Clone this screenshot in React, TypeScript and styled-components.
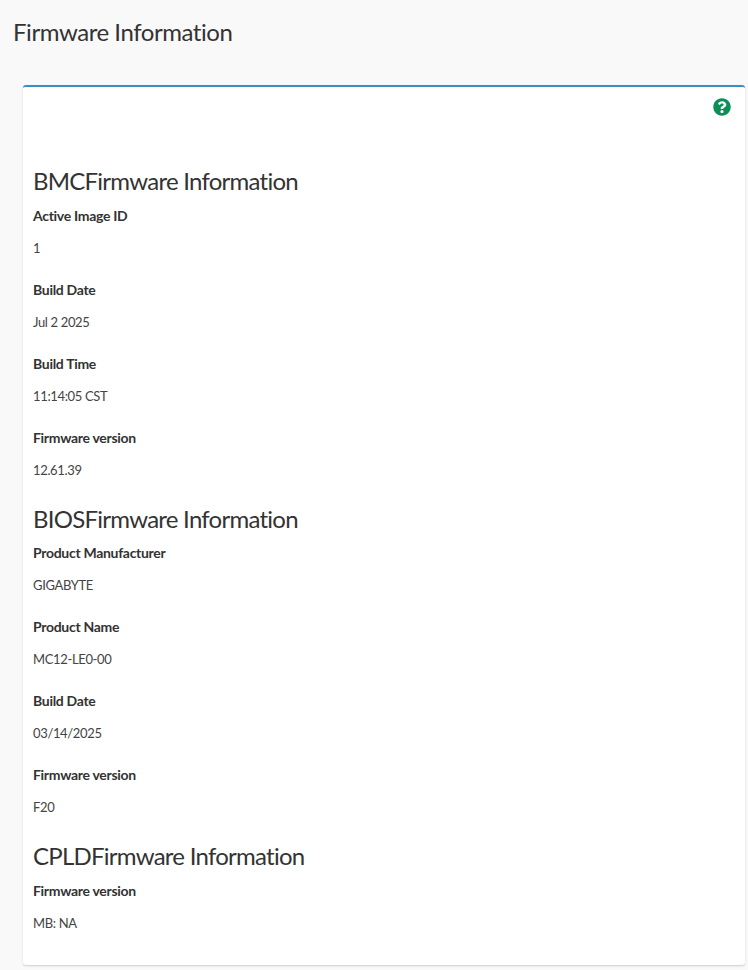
import React from "react";
import styled, { createGlobalStyle } from "styled-components";
import { FaQuestionCircle } from "react-icons/fa";

const Global = createGlobalStyle`
  html, body { margin: 0; padding: 0; background: #f9f9f9; }
  body { font-family: "Source Sans Pro", Lato, "Open Sans", sans-serif; color: #333; }
`;
const Page = styled.div`width: 748px; height: 970px; overflow: hidden; box-sizing: border-box;`;
const Header = styled.h1`margin: 0; padding: 18px 0 0 13px; height: 85px; box-sizing: border-box; font-size: 24px; line-height: 28px; font-weight: 400; letter-spacing: -0.45px; color: #333;`;
const Card = styled.div`margin: 0 3px 0 23px; height: 880px; box-sizing: border-box; background: #fff; border-top: 2px solid #3c8fc4; border-radius: 3px; box-shadow: 0 1px 2px rgba(0,0,0,.18); padding: 55.4px 10px 0; position: relative;`;
const Help = styled(FaQuestionCircle)`position: absolute; top: 11px; right: 14px; width: 18px; height: 18px; color: #0b8f57;`;
const Title = styled.h3`margin: 26px 0 11px; font-size: 24px; line-height: 26.4px; font-weight: 400; letter-spacing: -0.75px; color: #333;`;
const Row = styled.div`margin-bottom: 22px;`;
const Label = styled.div`font-size: 14px; font-weight: 700; line-height: 20px; letter-spacing: -0.3px; margin-bottom: 12px; color: #333;`;
const Value = styled.div`font-size: 13px; line-height: 20px; letter-spacing: -0.35px; color: #444;`;

const data: [string, [string, string][]][] = [
  ["BMCFirmware Information", [["Active Image ID","1"],["Build Date","Jul 2 2025"],["Build Time","11:14:05 CST"],["Firmware version","12.61.39"]]],
  ["BIOSFirmware Information", [["Product Manufacturer","GIGABYTE"],["Product Name","MC12-LE0-00"],["Build Date","03/14/2025"],["Firmware version","F20"]]],
  ["CPLDFirmware Information", [["Firmware version","MB: NA"]]],
];

export default function App() {
  return (
    <Page>
      <Global />
      <Header>Firmware Information</Header>
      <Card>
        <Help />
        {data.map(([t, rows]) => (
          <section key={t}>
            <Title>{t}</Title>
            {rows.map(([l, v]) => (
              <Row key={l + v}>
                <Label>{l}</Label>
                <Value>{v}</Value>
              </Row>
            ))}
          </section>
        ))}
      </Card>
    </Page>
  );
}
